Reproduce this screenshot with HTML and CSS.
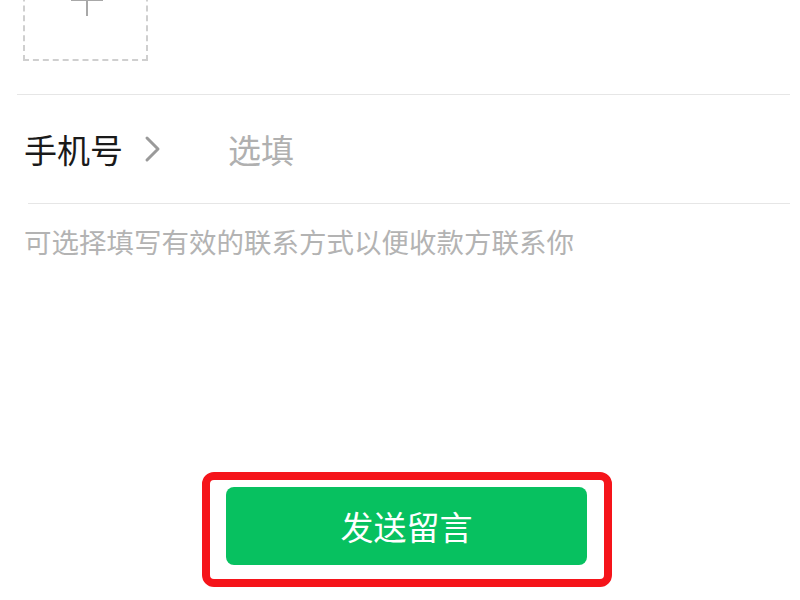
FILE: index.html
```html
<!DOCTYPE html>
<html lang="zh-CN">
<head>
	<meta charset="utf-8">
	<title>留言</title>
	<link rel="stylesheet" href="styles.css">
</head>
<body>
	<section class="form">
		<div class="upload">
			<span class="plus"></span>
		</div>

		<div class="divider top"></div>

		<div class="row phone">
			<span class="label">手机号</span>
			<svg class="chevron" width="18" height="28" viewBox="0 0 18 28">
				<polyline points="3,3 14,14 3,25" fill="none" stroke="#9a9a9a" stroke-width="3" stroke-linecap="round" stroke-linejoin="round"/>
			</svg>
			<span class="value">选填</span>
		</div>

		<div class="divider bottom"></div>

		<p class="hint">可选择填写有效的联系方式以便收款方联系你</p>
	</section>

	<div class="mark">
		<button class="send">发送留言</button>
	</div>
</body>
</html>
```

FILE: styles.css
```css
html, body {
	margin: 0;
	padding: 0;
	background-color: white;
}

body, button {
	font-family: "Noto Sans CJK SC", "Noto Sans", sans-serif;
}

.form {
	display: flex;
	flex-direction: column;
}

/* image slot, scrolled partly out of view */
.upload {
	position: relative;
	box-sizing: border-box;
	width: 125px;
	height: 125px;
	margin: -64px 0 0 23px;
	border: 2px dashed #cfcfcf;
}

.plus {
	position: absolute;
	left: 46px;
	top: 46px;
	width: 32px;
	height: 32px;
}
.plus::before, .plus::after {
	content: "";
	position: absolute;
	background-color: #a8a8a8;
}
.plus::before {
	left: 15px;
	top: 0;
	width: 2px;
	height: 32px;
}
.plus::after {
	left: 0;
	top: 15px;
	width: 32px;
	height: 2px;
}

.divider {
	height: 1px;
	background-color: #e6e6e6;
	margin-right: 10px;
}
.divider.top {
	margin-top: 33px;
	margin-left: 17px;
}
.divider.bottom {
	margin-left: 28px;
}

.row {
	display: flex;
	align-items: center;
	height: 108px;
	padding-left: 24px;
}

.phone .label {
	font-size: 33px;
	color: #1a1a1a;
}

.chevron {
	margin-left: 21px;
}

.phone .value {
	margin-left: 66px;
	font-size: 33px;
	color: #b0b0b0;
}

.hint {
	margin: 19px 0 0 24px;
	font-size: 27.5px;
	line-height: 36px;
	color: #b3b3b3;
}

/* red highlight drawn round the button */
.mark {
	box-sizing: border-box;
	width: 410px;
	margin: 213px 0 0 202px;
	padding: 7px 17px 14px 16px;
	border: 8px solid #f5141a;
	border-radius: 12px;
}

.send {
	display: block;
	width: 100%;
	height: 78px;
	border: none;
	border-radius: 8px;
	background-color: #07c160;
	color: white;
	font-size: 33px;
	cursor: pointer;
}
```
